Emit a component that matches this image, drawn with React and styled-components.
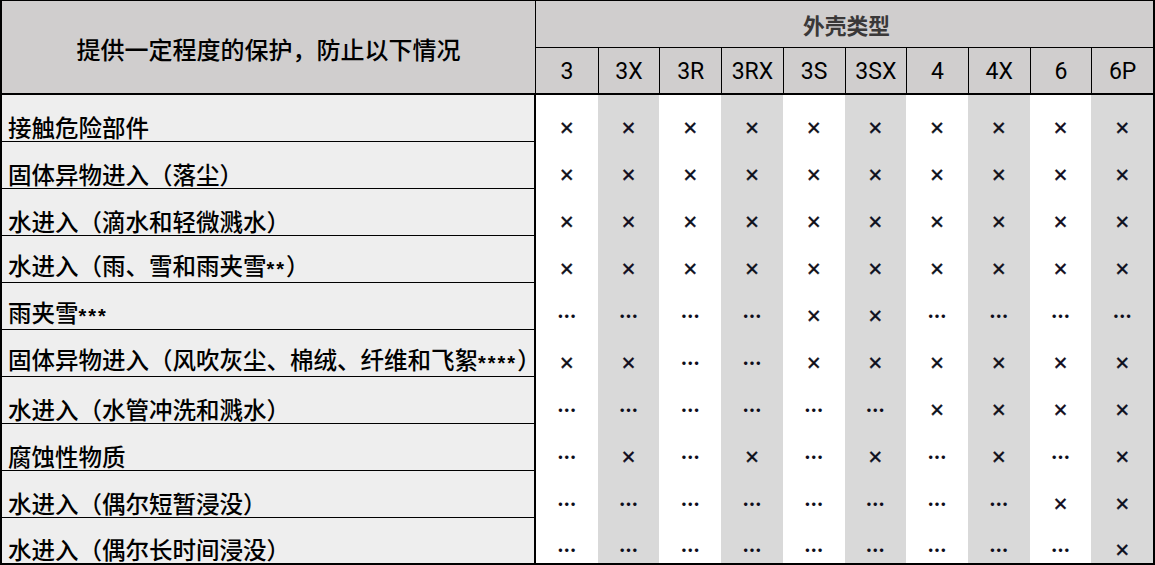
import React from "react";
import styled, { createGlobalStyle } from "styled-components";

const GlobalStyle = createGlobalStyle`
  html, body { margin: 0; padding: 0; background: #ffffff; }
  body { font-family: "Noto Sans CJK SC", "Noto Sans", sans-serif; }
  * { box-sizing: border-box; }
`;

const Table = styled.div`
  width: 1155px;
  height: 565px;
  border: 2px solid #000;
  border-top-width: 1px;
  display: flex;
  flex-direction: column;
  overflow: hidden;
`;

const Header = styled.div`
  display: flex;
  height: 94px;
  flex: none;
  background: #d0cece;
  border-bottom: 2px solid #000;
`;

const HeadLabel = styled.div`
  width: 534px;
  flex: none;
  border-right: 1px solid #000;
  display: flex;
  align-items: center;
  justify-content: center;
  font-family: "Noto Sans CJK SC", sans-serif;
  font-size: 24px;
  font-weight: 500;
  color: #000;
  padding-top: 2px;
`;

const HeadGroup = styled.div`
  flex: 1;
  display: grid;
  grid-template-rows: 47px 1fr;
`;

const GroupTitle = styled.div`
  border-bottom: 1px solid #000;
  display: flex;
  align-items: center;
  justify-content: center;
  font-family: "Noto Sans CJK SC", sans-serif;
  font-size: 21.75px;
  font-weight: 700;
  color: #3a3838;
  padding-left: 4px;
`;

const CodeRow = styled.div`
  display: grid;
  grid-template-columns: repeat(10, 1fr);
`;

const CodeCell = styled.div`
  border-left: ${(p) => (p.$first ? "none" : "1px solid #000")};
  display: flex;
  align-items: center;
  justify-content: center;
  font-family: Roboto, "Liberation Sans", sans-serif;
  font-size: 23px;
  color: #000;
  padding-top: 2px;
`;

const Body = styled.div`
  display: flex;
  flex-direction: column;
  flex: 1;
`;

const Row = styled.div`
  display: grid;
  grid-template-columns: 534px repeat(10, 1fr);
  height: ${(p) => (p.$last ? "45px" : "47px")};
  flex: none;
`;

const Label = styled.div`
  background: #eeeeee;
  border-right: 2px solid #000;
  border-bottom: ${(p) => (p.$last ? "none" : "1px solid #000")};
  display: flex;
  align-items: flex-end;
  padding-left: 6px;
  font-family: "Noto Sans CJK SC", sans-serif;
  font-size: 23.5px;
  font-weight: 500;
  line-height: 28px;
  color: #000;
  white-space: nowrap;
`;

const Stars = styled.span`
  font-family: "Liberation Sans", Arial, sans-serif;
  font-size: 20px;
  font-weight: 700;
  letter-spacing: 2px;
  position: relative;
  top: 1px;
`;

const Cell = styled.div`
  background: ${(p) => (p.$shade ? "#d9d9d9" : "#ffffff")};
  display: flex;
  align-items: center;
  justify-content: center;
  padding-top: 18px;
`;

const Cross = styled.span`
  font-family: "Liberation Sans", Arial, sans-serif;
  font-size: 24px;
  font-weight: 400;
  line-height: 20px;
  color: #0d0d1a;
  -webkit-text-stroke: 0.4px #0d0d1a;
`;

const Dots = styled.span`
  font-family: "Noto Sans CJK SC", sans-serif;
  font-size: 19px;
  line-height: 20px;
  color: #0d0d1a;
  font-weight: 900;
`;

const codes = ["3", "3X", "3R", "3RX", "3S", "3SX", "4", "4X", "6", "6P"];

const rows = [
  { text: "接触危险部件", marks: "xxxxxxxxxx" },
  { text: "固体异物进入（落尘）", marks: "xxxxxxxxxx" },
  { text: "水进入（滴水和轻微溅水）", marks: "xxxxxxxxxx" },
  { text: "水进入（雨、雪和雨夹雪", stars: "**", tail: "）", marks: "xxxxxxxxxx" },
  { text: "雨夹雪", stars: "***", marks: "....xx...." },
  { text: "固体异物进入（风吹灰尘、棉绒、纤维和飞絮", stars: "****", tail: "）", marks: "xx..xxxxxx" },
  { text: "水进入（水管冲洗和溅水）", marks: "......xxxx" },
  { text: "腐蚀性物质", marks: ".x.x.x.x.x" },
  { text: "水进入（偶尔短暂浸没）", marks: "........xx" },
  { text: "水进入（偶尔长时间浸没）", marks: ".........x" },
];

export default function App() {
  return (
    <>
      <GlobalStyle />
      <Table>
        <Header>
          <HeadLabel>提供一定程度的保护，防止以下情况</HeadLabel>
          <HeadGroup>
            <GroupTitle>外壳类型</GroupTitle>
            <CodeRow>
              {codes.map((c, i) => (
                <CodeCell key={c} $first={i === 0}>
                  {c}
                </CodeCell>
              ))}
            </CodeRow>
          </HeadGroup>
        </Header>
        <Body>
          {rows.map((r, ri) => {
            const last = ri === rows.length - 1;
            return (
              <Row key={ri} $last={last}>
                <Label $last={last}>
                  <span>
                    {r.text}
                    {r.stars && <Stars>{r.stars}</Stars>}
                    {r.tail}
                  </span>
                </Label>
                {r.marks.split("").map((m, ci) => (
                  <Cell key={ci} $shade={ci % 2 === 1}>
                    {m === "x" ? <Cross>×</Cross> : <Dots>…</Dots>}
                  </Cell>
                ))}
              </Row>
            );
          })}
        </Body>
      </Table>
    </>
  );
}
